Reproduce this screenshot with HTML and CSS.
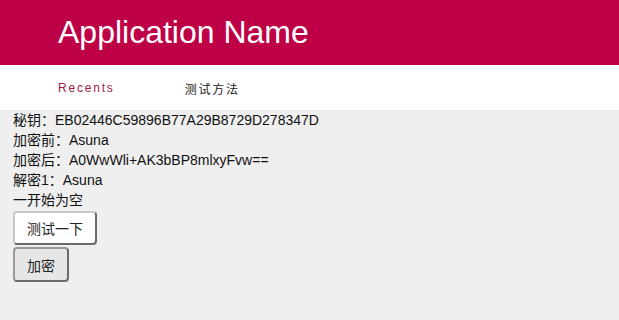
FILE: index.html
```html
<!DOCTYPE html>
<html>
<head>
<meta charset="utf-8">
<link rel="stylesheet" href="styles.css">
</head>
<body>
<header class="appbar">
  <h1 class="title">Application Name</h1>
</header>
<nav class="tabs">
  <span class="tab active">Recents</span>
  <span class="tab">测试方法</span>
</nav>
<main class="content">
  <div class="line">秘钥：EB02446C59896B77A29B8729D278347D</div>
  <div class="line">加密前：Asuna</div>
  <div class="line">加密后：A0WwWli+AK3bBP8mlxyFvw==</div>
  <div class="line">解密1：Asuna</div>
  <div class="line">一开始为空</div>
  <button class="btn btn-white">测试一下</button>
  <button class="btn btn-grey">加密</button>
</main>
</body>
</html>
```
FILE: styles.css
```css
html, body {
  margin: 0;
  padding: 0;
  background: #efefef;
  font-family: "Liberation Sans", Arial, "Noto Sans CJK SC", sans-serif;
  height: 100%;
}
.appbar {
  background: #be0046;
  height: 65px;
  display: flex;
  align-items: center;
  padding-left: 58px;
}
.title {
  margin: 0;
  color: #fff;
  font-weight: normal;
  font-size: 32px;
  line-height: 1;
  margin-top: -2px;
}
.tabs {
  background: #fff;
  height: 45px;
  display: flex;
  align-items: center;
  padding-left: 58px;
  gap: 70px;
}
.tab {
  font-size: 12px;
  letter-spacing: 1.8px;
  color: #222;
  margin-top: 1px;
}
.tab.active {
  color: #9a2249;
}
.content {
  padding: 0 13px;
  display: flex;
  flex-direction: column;
  align-items: flex-start;
}
.line {
  font-size: 14px;
  line-height: 20px;
  color: #111;
}
.btn {
  font-family: "Liberation Sans", Arial, "Noto Sans CJK SC", sans-serif;
  font-size: 14px;
  color: #222;
  border: 2px solid #6a6a6a;
  border-top-color: #c8c8c8;
  border-left-color: #c8c8c8;
  border-radius: 4px;
  padding: 0 10px;
}
.btn-white {
  background: #fff;
  height: 34px;
  width: 84px;
  margin-top: 1px;
}
.btn-grey {
  background: #e6e6e6;
  height: 35px;
  width: 56px;
  margin-top: 2px;
  border-color: #6a6a6a;
  border-top-color: #9a9a9a;
  border-left-color: #9a9a9a;
}
```
